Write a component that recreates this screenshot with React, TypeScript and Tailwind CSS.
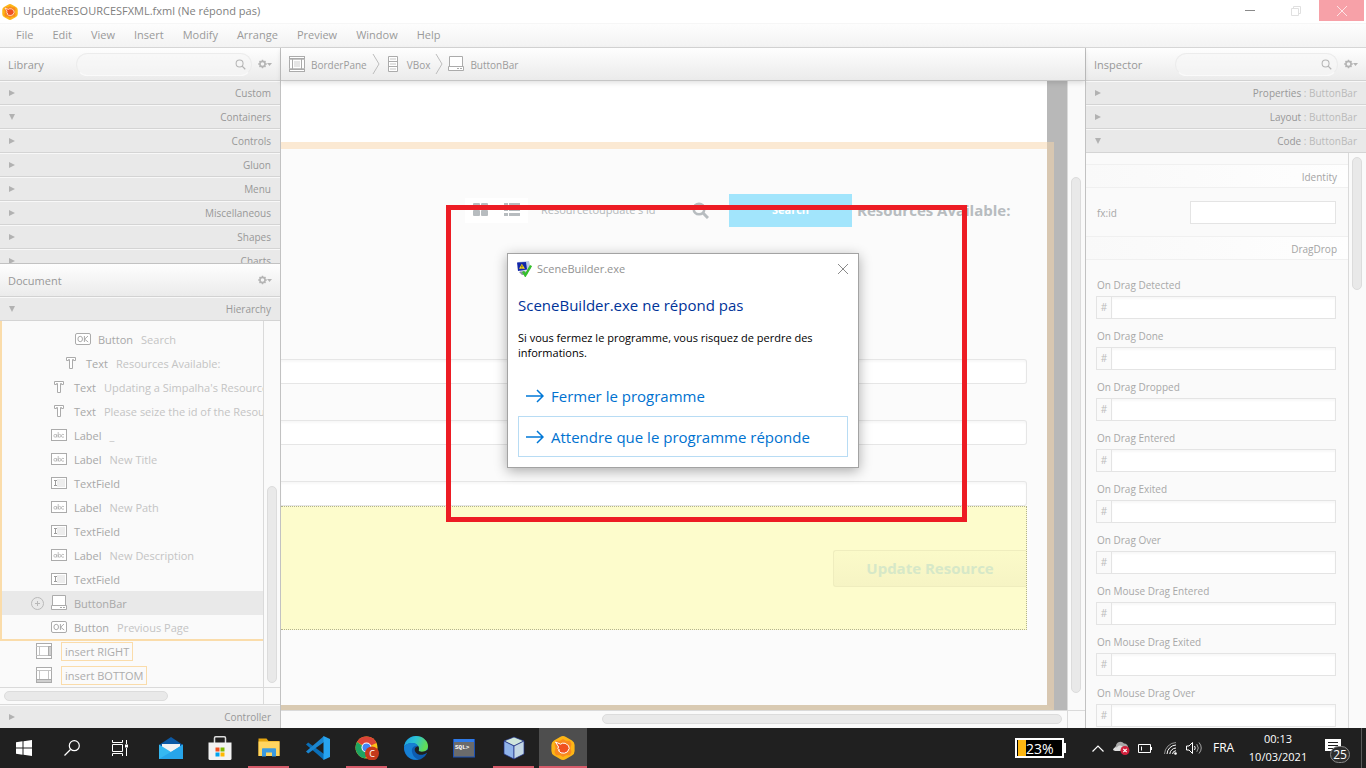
import React from "react";

type IconProps = { className?: string };

/* ---------- small drawings ---------- */

function SceneBuilderLogo({ className }: IconProps) {
  return (
    <svg viewBox="0 0 24 24" className={className} aria-hidden="true">
      <path
        d="M9 1q3-2 6 0l6 3.500q2.600 1.500 2.600 4.500v6q0 3-2.600 4.500L15 23q-3 2-6 0l-6-3.500Q.4 18 .4 15V9Q.4 6 3 4.500z"
        fill="#fdb515"
      />
      <path d="M12 3l3 1.800h4L20.500 8l-1 4 1 4-1.500 3.200h-4L12 21l-3-1.800H5L3.500 16l1-4-1-4L5 4.800h4z" fill="#f98a1f" />
      <path
        d="M4.500 6l5 2.200 2-1 2.600.1 1.600 1.100 1.800 1.200.7 2.900-1.800 3.400-3 1.300-3.400-.3-2.600-2.200 1.300-.6-2-1.600.9-1.500z"
        fill="#f0501f"
        stroke="#fff"
        strokeWidth="1"
        strokeLinejoin="round"
      />
    </svg>
  );
}

function Magnifier({ className }: IconProps) {
  return (
    <svg viewBox="0 0 12 12" className={className} fill="none" stroke="currentColor" aria-hidden="true">
      <circle cx="5" cy="5" r="3.8" strokeWidth="1.1" />
      <path d="M7.8 7.8l3.4 3.4" strokeWidth="1.4" />
    </svg>
  );
}

function GearMenu() {
  return (
    <svg viewBox="0 0 14 10" className="h-[10px] w-[14px]" aria-hidden="true">
      <circle cx="4.5" cy="5" r="2.6" fill="none" stroke="#b4b4b4" strokeWidth="1.6" />
      <g stroke="#b4b4b4" strokeWidth="1.4">
        <path d="M4.5 .7v1.6M4.5 7.7v1.6M.2 5h1.6M7.2 5h1.6M1.5 2l1.1 1.1M6.4 6.9l1.1 1.1M7.5 2L6.4 3.1M2.6 6.9L1.5 8" />
      </g>
      <path d="M9 4h5l-2.5 3z" fill="#b4b4b4" />
    </svg>
  );
}

function Arrow({ open }: { open?: boolean }) {
  return (
    <svg viewBox="0 0 6 6" className="size-[6px]" aria-hidden="true">
      {open ? <path d="M0 0h6L3 6z" fill="#b2b2b2" /> : <path d="M0 0v6l6-3z" fill="#b2b2b2" />}
    </svg>
  );
}

type Kind = "ok" | "text" | "label" | "field" | "bar" | "right" | "bottom" | "border" | "vbox";

function NodeIcon({ kind }: { kind: Kind }) {
  const s = { fill: "#fff", stroke: "#ababab", strokeWidth: 1 };
  return (
    <svg viewBox="0 0 16 16" className="size-4 shrink-0" aria-hidden="true">
      {kind === "ok" && (
        <>
          <rect x=".5" y="2.5" width="15" height="11" rx="1.5" {...s} />
          <ellipse cx="5.2" cy="8" rx="2.3" ry="2.7" fill="none" stroke="#a0a0a0" strokeWidth=".9" />
          <path d="M9.4 5v6M13 5L9.6 8.2 13.2 11" fill="none" stroke="#a0a0a0" strokeWidth=".9" />
        </>
      )}
      {kind === "text" && <path d="M3.5 2.5h9v3h-2v-1h-1v9h-3v-9h-1v1h-2z" {...s} />}
      {kind === "label" && (
        <>
          <rect x=".5" y="2.5" width="15" height="11" {...s} />
          <g fill="none" stroke="#b0b0b0" strokeWidth=".8">
            <circle cx="4.2" cy="8.8" r="1.4" />
            <path d="M5.7 7.2v3.2M7.2 5v5.4M13 7.8a1.5 1.5 0 100 2" />
            <circle cx="8.6" cy="8.8" r="1.4" />
          </g>
        </>
      )}
      {kind === "field" && (
        <>
          <rect x=".5" y="2.5" width="15" height="11" {...s} />
          <rect x="6" y="4" width="8" height="8" fill="#ededed" />
          <path d="M3 5.5h3M3 10.5h3M4.5 5.5v5" stroke="#9c9c9c" fill="none" />
        </>
      )}
      {kind === "bar" && (
        <>
          <path d="M1.5 .5h13v10h-13z" {...s} />
          <path d="M.5 10.5h15v4H.5z" {...s} />
          <path d="M9 12.5h2M12 12.5h2" stroke="#ababab" />
        </>
      )}
      {(kind === "right" || kind === "bottom" || kind === "border") && (
        <>
          <rect x=".5" y=".5" width="15" height="15" {...s} />
          <path d="M.5 3.5h15M.5 12.5h15M3.5 3.5v9M12.5 3.5v9" stroke="#c4c4c4" fill="none" />
          {kind === "right" && <rect x="12.5" y="3.5" width="3" height="9" fill="#cfcfcf" stroke="#ababab" />}
          {kind === "bottom" && <rect x=".5" y="12.5" width="15" height="3" fill="#cfcfcf" stroke="#ababab" />}
          {kind === "border" && (
            <>
              <path d="M.5 2.5h15M.5 13.5h15M3.5 2.5v11M12.5 2.5v11" stroke="#ababab" />
              <rect x="5" y="5" width="6" height="6" fill="#e6e6e6" />
            </>
          )}
        </>
      )}
      {kind === "vbox" && (
        <>
          <path d="M3.5 .5h9v15h-9zM3.5 5.5h9M3.5 10.5h9" {...s} />
          <path d="M5 3h6M5 8h6M5 13h6" stroke="#e2e2e2" strokeWidth="2" />
        </>
      )}
    </svg>
  );
}

/* ---------- shared pieces ---------- */

const headClass =
  "flex h-[33px] shrink-0 items-center border-b border-[#d2d2d2] bg-linear-to-b from-[#fefefe] to-[#ebebeb] px-2 text-[11px] text-[#989898]";

function PanelHead({ title, search }: { title: string; search?: string }) {
  return (
    <div className={headClass}>
      <h2 className="flex-1 pt-0.5">{title}</h2>
      {search && (
        <label className={"relative mr-[6px] flex items-center " + search}>
          <input
            aria-label={"Search " + title}
            className="h-[23px] w-full rounded-full border border-[#ececec] border-b-[#fafafa] bg-[#f7f7f7]/60 pr-6 pl-3 text-[11px] outline-none"
          />
          <Magnifier className="absolute right-[6px] size-[11px] text-[#b4b4b4]" />
        </label>
      )}
      <button aria-label={title + " options"}>
        <GearMenu />
      </button>
    </div>
  );
}

function Section({ name, open, suffix }: { name: string; open?: boolean; suffix?: string }) {
  return (
    <button
      aria-expanded={!!open}
      className="flex h-6 w-full shrink-0 items-center justify-between border-t border-b border-t-[#f8f8f8] border-b-[#d4d4d4] bg-[#e9e9e9] pr-[9px] pl-[9px] text-[10px] text-[#989898]"
    >
      <Arrow open={open} />
      <span>
        {name}
        {suffix && <span className="text-[#bababa]"> : {suffix}</span>}
      </span>
    </button>
  );
}

/* ---------- left side ---------- */

const library = ["Custom", "Containers", "Controls", "Gluon", "Menu", "Miscellaneous", "Shapes", "Charts"];

type Node = { kind: Kind; name: string; info?: string; pad: string; selected?: boolean };

const tree: Node[] = [
  { kind: "ok", name: "Button", info: "Search", pad: "pl-[73px]" },
  { kind: "text", name: "Text", info: "Resources Available:", pad: "pl-[61px]" },
  { kind: "text", name: "Text", info: "Updating a Simpalha's Resource", pad: "pl-[49px]" },
  { kind: "text", name: "Text", info: "Please seize the id of the Resource", pad: "pl-[49px]" },
  { kind: "label", name: "Label", info: "_", pad: "pl-[49px]" },
  { kind: "label", name: "Label", info: "New Title", pad: "pl-[49px]" },
  { kind: "field", name: "TextField", pad: "pl-[49px]" },
  { kind: "label", name: "Label", info: "New Path", pad: "pl-[49px]" },
  { kind: "field", name: "TextField", pad: "pl-[49px]" },
  { kind: "label", name: "Label", info: "New Description", pad: "pl-[49px]" },
  { kind: "field", name: "TextField", pad: "pl-[49px]" },
  { kind: "bar", name: "ButtonBar", pad: "pl-[29px]", selected: true },
  { kind: "ok", name: "Button", info: "Previous Page", pad: "pl-[49px]" },
];

function TreeRow({ node }: { node: Node }) {
  return (
    <li
      className={
        "flex h-6 items-center whitespace-nowrap text-[11px] text-[#a8a8a8] " +
        node.pad +
        (node.selected ? " bg-[#e9e9e9]" : "")
      }
    >
      {node.selected && (
        <svg viewBox="0 0 13 13" className="mr-[7px] size-[13px]" fill="none" stroke="#b8b8b8" aria-hidden="true">
          <circle cx="6.5" cy="6.5" r="6" />
          <path d="M6.5 4v5M4 6.5h5" />
        </svg>
      )}
      <NodeIcon kind={node.kind} />
      <span className="ml-[7px] pt-0.5">{node.name}</span>
      {node.info && <span className="ml-2 pt-0.5 text-[#c4c4c4]">{node.info}</span>}
    </li>
  );
}

function LeftPanel() {
  return (
    <aside className="flex w-[281px] shrink-0 flex-col border-r border-[#c2c2c2] bg-[#fafafa]">
      <PanelHead title="Library" search="w-[176px]" />
      <div className="h-[182px] shrink-0 overflow-hidden">
        {library.map((n) => (
          <Section key={n} name={n} open={n === "Containers"} />
        ))}
      </div>
      <div className="border-t border-[#c2c2c2]">
        <PanelHead title="Document" />
      </div>
      <Section name="Hierarchy" open />
      <div className="flex min-h-0 flex-1">
        <div className="min-w-0 flex-1 overflow-hidden border-r border-[#dadada]">
          <ul className="overflow-hidden border-b-2 border-l-2 border-[#fadcaa]">
            <li className="-mt-[18px] flex h-6 items-center pl-[85px]">
              <NodeIcon kind="field" />
            </li>
            {tree.map((n, i) => (
              <TreeRow key={i} node={n} />
            ))}
          </ul>
          <ul className="-mt-0.5 mb-0.5 text-[11px] text-[#acacac]">
            {(["right", "bottom"] as const).map((k) => (
              <li key={k} className="flex h-6 items-center gap-[9px] pl-9">
                <NodeIcon kind={k} />
                <span className="border border-[#fadcaa] px-[3px] leading-[17px]">insert {k.toUpperCase()}</span>
              </li>
            ))}
          </ul>
        </div>
        <div className="flex w-4 flex-col items-center justify-end pb-1">
          <div className="h-[197px] w-[10px] rounded-full border border-[#dcdcdc] bg-[#e9e9e9]" />
        </div>
      </div>
      <div className="flex h-[18px] shrink-0 border-t border-b border-[#dadada]">
        <div className="flex flex-1 items-center border-r border-[#dadada] pl-1">
          <div className="h-[10px] w-[164px] rounded-full border border-[#dcdcdc] bg-[#e9e9e9]" />
        </div>
        <div className="w-4" />
      </div>
      <div className="h-[23px] shrink-0 overflow-hidden">
        <Section name="Controller" />
      </div>
    </aside>
  );
}

/* ---------- centre ---------- */

function Breadcrumbs() {
  const items: { kind: Kind; name: string }[] = [
    { kind: "border", name: "BorderPane" },
    { kind: "vbox", name: "VBox" },
    { kind: "bar", name: "ButtonBar" },
  ];
  return (
    <nav className="z-10 flex h-[33px] shrink-0 items-center border-b border-[#c6c6c6] bg-linear-to-b from-[#fefefe] to-[#ebebeb] pl-2 text-[10px] text-[#9c9c9c] shadow-[0_2px_5px_rgba(0,0,0,0.12)]">
      {items.map((it, i) => (
        <React.Fragment key={it.name}>
          {i > 0 && (
            <svg viewBox="0 0 8 22" className="mx-[5px] h-[22px] w-2" fill="none" stroke="#bdbdbd" aria-hidden="true">
              <path d="M1 1l6 10-6 10" />
            </svg>
          )}
          <NodeIcon kind={it.kind} />
          <a href="#" className="ml-[6px] pt-0.5">
            {it.name}
          </a>
        </React.Fragment>
      ))}
    </nav>
  );
}

const fieldClass =
  "block h-[25px] w-full rounded-r-[3px] border border-l-0 border-[#e6e6e6] bg-white shadow-[inset_0_2px_2px_rgba(0,0,0,0.03)] outline-none";

function Design() {
  return (
    <div className="relative min-w-0 flex-1 overflow-hidden bg-[#b8b8b8]">
      <div className="mr-5 flex h-full flex-col bg-white pt-[61px]">
        <div className="flex-1 bg-[#fbfbfb] pt-[52px]">
          <div className="flex h-[33px] items-center justify-end pr-10">
            <div className="flex h-[25px] w-[63px] items-center justify-between bg-white px-2 text-[#b7bcbf]">
              <svg viewBox="0 0 15 13" className="mb-[3px] h-[13px] w-[15px]" fill="currentColor" aria-hidden="true">
                <rect width="7" height="6" rx="1" />
                <rect x="8" width="7" height="6" rx="1" />
                <rect y="7" width="7" height="6" rx="1" />
                <rect x="8" y="7" width="7" height="6" rx="1" />
              </svg>
              <svg viewBox="0 0 16 13" className="mb-[3px] h-[13px] w-4" fill="currentColor" aria-hidden="true">
                <path d="M0 0h4v3H0zM5 0h11v3H5zM0 5h4v3H0zM5 5h11v3H5zM0 10h4v3H0zM5 10h11v3H5z" />
              </svg>
            </div>
            <input
              aria-label="Resource id"
              placeholder="Resourcetoupdate's id"
              className="ml-[13px] w-[140px] bg-transparent text-[11px] outline-none placeholder:text-[#b4b8ba]"
            />
            <svg viewBox="0 0 17 17" className="ml-[11px] size-[17px]" fill="none" stroke="#b7bcbf" aria-hidden="true">
              <circle cx="7" cy="7" r="5.3" strokeWidth="2.6" />
              <path d="M11 11l5 5" strokeWidth="3" />
            </svg>
            <button className="ml-5 h-[33px] w-[123px] bg-[#a2e5fc] text-[11px] font-bold text-white">Search</button>
            <span className="ml-[5px] w-[150px] whitespace-nowrap text-[15px] font-bold text-[#b7bcbf]">
              Resources Available:
            </span>
          </div>
          <div className="mt-[132px] mr-5">
            <div className="flex flex-col gap-9">
              <input aria-label="New Title" className={fieldClass} />
              <input aria-label="New Path" className={fieldClass} />
              <input aria-label="New Description" className={fieldClass} />
            </div>
            <div className="flex h-[124px] items-center justify-end border border-l-0 border-dotted border-[#b2b28e] bg-[#fdfccc]">
              <button className="h-[37px] w-[193px] rounded-l-[3px] border border-r-0 border-[#efedbe] bg-linear-to-b from-[#fbfac9] to-[#f6f4c4] text-[15px] font-bold text-[#d6e8c8]">
                Update Resource
              </button>
            </div>
          </div>
        </div>
      </div>
      <div className="pointer-events-none absolute top-[61px] right-[13px] bottom-0 left-0 border-t-[7px] border-r-[7px] border-b-[5px] border-[rgba(251,216,171,0.49)] border-b-[#d9cab2]" />
    </div>
  );
}

function Center() {
  return (
    <main className="flex min-w-0 flex-1 flex-col bg-[#fafafa]">
      <Breadcrumbs />
      <div className="flex min-h-0 flex-1">
        <Design />
        <div className="flex w-[18px] flex-col items-center border-l border-[#dadada] pt-24 pr-px pb-[17px]">
          <div className="w-[10px] flex-1 rounded-full border border-[#dcdcdc] bg-[#e9e9e9]" />
        </div>
      </div>
      <div className="flex h-[18px] shrink-0 border-t border-[#dadada]">
        <div className="flex flex-1 items-center justify-end pr-[5px] pb-px">
          <div className="h-[10px] w-[460px] rounded-full border border-[#dcdcdc] bg-[#e9e9e9]" />
        </div>
        <div className="w-[18px] border-l border-[#dadada]" />
      </div>
    </main>
  );
}

/* ---------- right side ---------- */

const handlers = [
  "On Drag Detected",
  "On Drag Done",
  "On Drag Dropped",
  "On Drag Entered",
  "On Drag Exited",
  "On Drag Over",
  "On Mouse Drag Entered",
  "On Mouse Drag Exited",
  "On Mouse Drag Over",
];

function GroupTitle({ children }: { children: string }) {
  return (
    <h3 className="flex h-6 items-center justify-end border-y border-[#f0f0f0] bg-linear-to-r from-[#f9f9f9] to-[#fefefe] pt-0.5 pr-[11px] text-[10px] text-[#a4a4a4]">
      {children}
    </h3>
  );
}

function RightPanel() {
  return (
    <aside className="flex w-[281px] shrink-0 flex-col border-l border-[#c2c2c2] bg-[#fafafa]">
      <PanelHead title="Inspector" search="w-[163px]" />
      <Section name="Properties" suffix="ButtonBar" />
      <Section name="Layout" suffix="ButtonBar" />
      <Section name="Code" suffix="ButtonBar" open />
      <div className="flex min-h-0 flex-1">
        <div className="min-w-0 flex-1 overflow-hidden border-r border-[#dadada] pt-[11px] text-[10px] text-[#a8a8a8]">
          <GroupTitle>Identity</GroupTitle>
          <label className="flex h-12 items-center justify-between pr-3 pl-[11px]">
            <span className="pt-0.5">fx:id</span>
            <input className="h-[23px] w-[146px] border border-[#e4e4e4] bg-white outline-none" />
          </label>
          <GroupTitle>DragDrop</GroupTitle>
          <div className="flex flex-col gap-[10px] pt-[18px] pr-3 pl-[10px]">
            {handlers.map((h) => (
              <label key={h} className="block">
                <span className="block h-[18px] pl-px leading-[15px]">{h}</span>
                <span className="flex h-[23px] border border-[#e4e4e4] leading-[21px]">
                  <span className="w-[15px] border-r border-[#e4e4e4] text-center text-[#bcbcbc]">#</span>
                  <input className="min-w-0 flex-1 bg-white shadow-[inset_0_2px_2px_rgba(0,0,0,0.03)] outline-none" />
                </span>
              </label>
            ))}
          </div>
        </div>
        <div className="w-[17px] pt-1 pl-[3px]">
          <div className="h-[133px] w-[10px] rounded-full border border-[#dcdcdc] bg-[#e9e9e9]" />
        </div>
      </div>
    </aside>
  );
}

/* ---------- dialog ---------- */

function CommandArrow() {
  return (
    <svg viewBox="0 0 18 14" className="h-[14px] w-[18px]" fill="none" stroke="#0078d7" strokeWidth="1.5" aria-hidden="true">
      <path d="M0 7h17M11 1l6 6-6 6" />
    </svg>
  );
}

function Dialog() {
  return (
    <div
      role="dialog"
      aria-label="SceneBuilder.exe"
      className="absolute top-[253px] left-1/2 z-30 w-[352px] -translate-x-1/2 border border-[#a3a3a3] bg-white px-[10px] pb-[10px] shadow-[0_3px_12px_rgba(0,0,0,0.32)]"
    >
      <div className="flex h-[29px] items-center">
        <svg viewBox="0 0 16 16" className="mr-[5px] ml-[-2px] size-4" aria-hidden="true">
          <path d="M2 1l11-1 2 8-11 3z" fill="#b9c9e6" />
          <path d="M1 1.5l9-.5 1 7.5-9 1.5z" fill="#1226a8" />
          <path d="M5.8 2.8l3.2 5H3z" fill="#f8d91c" />
          <path d="M5.9 4.4v1.7M5.9 6.6v.7" stroke="#222" strokeWidth=".8" />
          <path d="M3 11l6-1 3 3-6 1z" fill="#8a93a0" />
          <path d="M7 10.5l2.3 3.8L15 4.5" fill="none" stroke="#35c12b" strokeWidth="2.4" />
        </svg>
        <span className="flex-1 pt-0.5 text-[11px] text-[#929292]">SceneBuilder.exe</span>
        <button aria-label="Fermer" className="-mr-px">
          <svg viewBox="0 0 12 12" className="size-3" stroke="#8a8a8a" aria-hidden="true">
            <path d="M1 1l10 10M11 1L1 11" />
          </svg>
        </button>
      </div>
      <h1 className="mt-[11px] text-[15px] leading-[22px] text-[#003399]">SceneBuilder.exe ne répond pas</h1>
      <p className="mt-[14px] text-[11px] leading-[15px] text-black">
        Si vous fermez le programme, vous risquez de perdre des informations.
      </p>
      <div className="mt-[15px] flex flex-col text-[15px] text-[#0072d0]">
        <button className="flex h-[41px] items-center gap-[7px] border border-transparent pl-[7px]">
          <CommandArrow />
          <span className="pt-0.5">Fermer le programme</span>
        </button>
        <button className="flex h-[41px] items-center gap-[7px] border border-[#b8dcf4] pl-[7px]">
          <CommandArrow />
          <span className="pt-0.5">Attendre que le programme réponde</span>
        </button>
      </div>
    </div>
  );
}

/* ---------- taskbar ---------- */

const apps: { name: string; running?: boolean; active?: boolean; icon: React.ReactNode }[] = [
  {
    name: "Mail",
    icon: (
      <svg viewBox="0 0 24 24" className="size-6">
        <path d="M0 9L12 1l12 8v3H0z" fill="#0c59a4" />
        <path d="M3 8h18v8H3z" fill="#f2f2f2" />
        <path d="M0 8.500l12 7.500 12-7.500V23H0z" fill="#35b8f1" />
        <path d="M0 23L14 14.800 24 8.500V23z" fill="#27a5ea" />
      </svg>
    ),
  },
  {
    name: "Store",
    icon: (
      <svg viewBox="0 0 24 24" className="size-6">
        <path d="M6.500 7V2q0-1.200 1.200-1.200h8.600q1.200 0 1.200 1.200v5" fill="none" stroke="#ddd" strokeWidth="1.500" />
        <path d="M.5 6.500h23v16q0 1.500-1.500 1.500H2Q.5 24 .5 22.500z" fill="#f3f3f3" />
        <path d="M7.500 11.500h4v4h-4z" fill="#f25022" />
        <path d="M12.500 11.500h4v4h-4z" fill="#7fba00" />
        <path d="M7.500 16.500h4v4h-4z" fill="#00a4ef" />
        <path d="M12.500 16.500h4v4h-4z" fill="#ffb900" />
      </svg>
    ),
  },
  {
    name: "Explorer",
    running: true,
    icon: (
      <svg viewBox="0 0 24 24" className="size-6">
        <path d="M1.500 2.500h8l2 2.500H22.500V20h-21z" fill="#e5a50f" />
        <path d="M1.500 5.500h21V20h-21z" fill="#ffd560" />
        <path d="M5 20.500v-7.500q0-.8.800-.8h12.400q.8 0 .8.800v7.500h-4v-4H9v4z" fill="#3b9ae0" />
      </svg>
    ),
  },
  {
    name: "Code",
    icon: (
      <svg viewBox="0 0 24 24" className="size-6">
        <path d="M0 8.500l2.200-2L18 18v6z" fill="#0a6fb8" />
        <path d="M0 15.500l2.200 2L18 6V0z" fill="#1b86d0" />
        <path d="M17.500 0l6.500 3v18l-6.500 3z" fill="#27a4f0" />
      </svg>
    ),
  },
  {
    name: "Chrome",
    running: true,
    icon: (
      <svg viewBox="0 0 24 24" className="size-6">
        <circle cx="11.500" cy="11.500" r="11" fill="#fbc116" />
        <path d="M11.500 11.500L2 6A11 11 0 0121.500 7z" fill="#db4437" />
        <path d="M2 6A11 11 0 0010 22.400l4.500-8z" fill="#1da462" />
        <circle cx="11.500" cy="11.500" r="5" fill="#fff" />
        <circle cx="11.500" cy="11.500" r="4" fill="#4285f4" />
        <circle cx="17" cy="17.500" r="7" fill="#c5391b" />
        <text x="17" y="20.800" textAnchor="middle" fontSize="9" fill="#fff">
          C
        </text>
      </svg>
    ),
  },
  {
    name: "Edge",
    icon: (
      <svg viewBox="0 0 24 24" className="size-6">
        <defs>
          <linearGradient id="edge" x1="0" y1="0" x2="1" y2=".3">
            <stop offset="0" stopColor="#1b9de2" />
            <stop offset=".5" stopColor="#2cc3d5" />
            <stop offset="1" stopColor="#62dc55" />
          </linearGradient>
        </defs>
        <circle cx="12" cy="12" r="12" fill="#0d5cb0" />
        <path d="M0 11C1 4 6 0 12 0c7 0 12 5 12 10 0 4-3 6-6 6-3 0-4-1-3.500-2C16 11 13 7 8.500 7 4 7 1 9 0 11z" fill="url(#edge)" />
        <path d="M0 11c1-2 4-4 8-4 3 0 5 1 6 3-4-1.500-7 2-6 6 1 5 5 8 8 7-8 3-16-3-16-12z" fill="#1780d4" />
        <path d="M14.300 10.200c-3 .3-4.800 3.200-2.500 6.200 2.400 3 7.200 3.300 11 .4l1.200 1V14l-.5-.2c-2 2-7.800 2.800-8.800.8 0-1 1-1.600-.4-4.400z" fill="#202020" />
      </svg>
    ),
  },
  {
    name: "SQL",
    icon: (
      <svg viewBox="0 0 22 20" className="mr-0.5 h-5 w-[22px]">
        <rect x=".5" y="1.500" width="21" height="17.500" fill="#6b6b6b" stroke="#1a50b4" />
        <rect x="1" y="1" width="20" height="3" fill="#2f7be8" />
        <text x="2" y="10.500" fontSize="6" fill="#fff" fontFamily="Liberation Mono, monospace" fontWeight="700">
          SQL&gt;
        </text>
      </svg>
    ),
  },
  {
    name: "NetBeans",
    running: true,
    icon: (
      <svg viewBox="0 0 24 24" className="size-6" stroke="#1d2f86" strokeWidth=".7">
        <path d="M12 1l10 4-10 5L2 5z" fill="#cfe6dc" />
        <path d="M2 5l10 5v13L2 18z" fill="#90b4ea" />
        <path d="M22 5l-10 5v13l10-5z" fill="#c4d8e4" />
      </svg>
    ),
  },
  { name: "Scene Builder", running: true, active: true, icon: <SceneBuilderLogo className="size-6" /> },
];

function Taskbar() {
  return (
    <footer className="flex h-10 shrink-0 items-center bg-[#202020] text-[11px] text-white">
      <button aria-label="Démarrer" className="flex w-12 justify-center">
        <svg viewBox="0 0 16 16" className="size-4" fill="#fff">
          <path d="M0 2.200l6.500-.9v6.200H0zM7.500 1.200L16 0v7.500H7.500zM0 8.500h6.500v6.200L0 13.800zM7.500 8.500H16V16l-8.500-1.200z" />
        </svg>
      </button>
      <button aria-label="Rechercher" className="flex w-12 justify-center">
        <svg viewBox="0 0 16 16" className="size-4" fill="none" stroke="#fff" strokeWidth="1.200">
          <circle cx="10.300" cy="5.700" r="5" />
          <path d="M6.500 9.500L.5 15.500" />
        </svg>
      </button>
      <button aria-label="Vue des tâches" className="mr-0.5 flex w-12 justify-center">
        <svg viewBox="0 0 16 16" className="size-4" fill="none" stroke="#fff">
          <path d="M.5 0v2.500h10V0M.5 16v-2.500h10V16M.5 4.500h10v7H.5zM14.500 0v4M14.500 8v8" />
          <path d="M13 4.500h3v3h-3z" fill="#fff" stroke="none" />
        </svg>
      </button>
      {apps.map((a) => (
        <button
          key={a.name}
          aria-label={a.name}
          className={
            "relative flex h-10 items-center justify-center " + (a.active ? "ml-px w-12 bg-[#4e4e4e]" : "w-[49px]")
          }
        >
          {a.icon}
          {a.running && (
            <span className={"absolute bottom-0 h-[2px] bg-[#d75b6a] " + (a.active ? "inset-x-0" : "inset-x-1")} />
          )}
        </button>
      ))}
      <div className="flex-1" />
      <div className="flex items-center">
        <div className="flex h-5 w-[49px] items-center border-2 border-white bg-black">
          <div className="ml-px h-4 w-2 bg-[#fdb713]" />
          <span className="text-[14px]">23%</span>
        </div>
        <div className="h-[10px] w-[2px] bg-white" />
      </div>
      <svg viewBox="0 0 12 7" className="ml-[26px] h-[7px] w-3" fill="none" stroke="#fff" strokeWidth="1.200">
        <path d="M.5 6.500L6 1l5.500 5.500" />
      </svg>
      <svg viewBox="0 0 18 14" className="ml-[9px] h-[14px] w-[18px]">
        <path d="M3 10a3 3 0 010-5 4.500 4.500 0 018-2.500A4 4 0 0115 7v3z" fill="#a8a8a8" />
        <path d="M0 9a3 3 0 014-2.500C6 3 10 5 10 7v3H2z" fill="#dedede" />
        <circle cx="12" cy="9.500" r="4.500" fill="#d2203c" />
        <path d="M10.300 7.800l3.400 3.400M13.700 7.800l-3.400 3.400" stroke="#fff" strokeWidth="1.200" />
      </svg>
      <svg viewBox="0 0 15 9" className="ml-[7px] h-[9px] w-[15px]" fill="none" stroke="#fff">
        <path d="M.5 .5h12v8H.5zM13.500 3v3M3.500 2.500v4" />
      </svg>
      <svg viewBox="0 0 14 14" className="ml-[11px] size-[14px]" fill="none" stroke="#fff">
        <path d="M.5 13A12 12 0 0112 1.500" opacity=".5" />
        <path d="M3 13a9.500 9.500 0 019-9M5.800 13A6.500 6.500 0 0112 7M8.500 13A3.800 3.800 0 0112 9.700" />
        <circle cx="11.500" cy="12.500" r="1.300" fill="#fff" stroke="none" />
      </svg>
      <svg viewBox="0 0 17 14" className="ml-2 h-[14px] w-[17px]" fill="none" stroke="#fff">
        <path d="M.5 5h2.500l3.500-3.500v11L3 9H.5z" />
        <path d="M8.500 5q1.500 2 0 4" />
        <path d="M10.800 3.200q3 3.800 0 7.600M13 1.500q4.500 5.500 0 11" opacity=".6" />
      </svg>
      <span className="ml-[10px] w-6 text-[12px]">FRA</span>
      <div className="ml-2 w-[66px] text-center leading-[18px] whitespace-nowrap">
        <div>00:13</div>
        <div>10/03/2021</div>
      </div>
      <button aria-label="Notifications" className="relative ml-[14px] h-8 w-7">
        <svg viewBox="0 0 16 16" className="absolute top-[7px] left-0 size-4">
          <path d="M0 0h16v12h-4v4l-4-4H0z" fill="#fff" />
          <path d="M3 3.500h10M3 6.500h10M3 9.500h6" stroke="#202020" />
        </svg>
        <span className="absolute top-[14px] left-[5px] h-[17px] w-5 rounded-full border border-[#8a8a8a] bg-[#2e2e2e] text-center text-[12px] leading-[15px]">
          25
        </span>
      </button>
      <div className="mr-1 ml-2 h-10 w-px bg-[#5a5a5a]" />
    </footer>
  );
}

/* ---------- window ---------- */

const menus = ["File", "Edit", "View", "Insert", "Modify", "Arrange", "Preview", "Window", "Help"];

export default function App() {
  return (
    <div className="relative flex h-screen flex-col overflow-hidden bg-white font-['Open_Sans','Noto_Sans',sans-serif]">
      <header className="flex h-[23px] shrink-0 items-start justify-between text-[11px] text-[#808080]">
        <div className="flex h-[23px] items-center gap-[5px] pl-[2px]">
          <SceneBuilderLogo className="size-4" />
          UpdateRESOURCESFXML.fxml (Ne répond pas)
        </div>
        <div className="flex h-[21px] pr-[2px]">
          <button aria-label="Réduire" className="flex w-[46px] items-center justify-center">
            <span className="h-px w-[10px] bg-[#8a8a8a]" />
          </button>
          <button aria-label="Restaurer" className="flex w-[46px] items-center justify-center">
            <svg viewBox="0 0 10 10" className="size-[10px]" fill="none" stroke="#e0e0e0">
              <path d="M.5 2.500h7v7h-7zM2.500 2V.5h7v7H8" />
            </svg>
          </button>
          <button aria-label="Fermer la fenêtre" className="flex w-[45px] items-center justify-center bg-[#f7a1a8]">
            <svg viewBox="0 0 10 10" className="size-[10px]" stroke="#fde4e6">
              <path d="M0 0l10 10M10 0L0 10" />
            </svg>
          </button>
        </div>
      </header>
      <nav className="flex h-[25px] shrink-0 items-center gap-[19px] border-t border-b border-t-[#f6f6f6] border-b-[#d6d6d6] bg-linear-to-b from-[#fdfdfd] to-[#f3f3f3] pl-4 text-[11px] text-[#9a9a9a]">
        {menus.map((m) => (
          <button key={m}>{m}</button>
        ))}
      </nav>
      <div className="flex min-h-0 flex-1">
        <LeftPanel />
        <Center />
        <RightPanel />
      </div>
      <Taskbar />
      <div className="pointer-events-none absolute top-[205px] left-[446px] z-20 h-[317px] w-[521px] border-[5px] border-[#ed1c24]" />
      <Dialog />
    </div>
  );
}
